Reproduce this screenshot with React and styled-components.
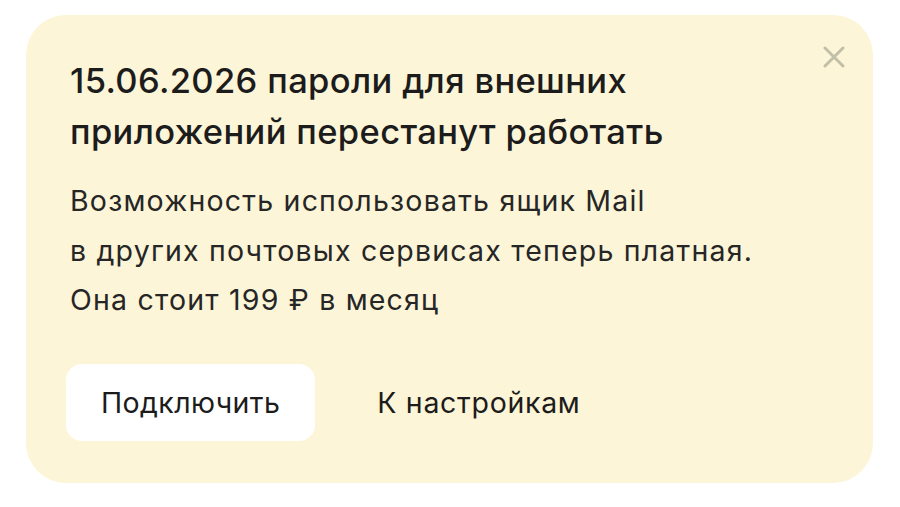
import React from 'react';
import styled, { createGlobalStyle } from 'styled-components';

const GlobalStyle = createGlobalStyle`
  html, body {
    margin: 0;
    padding: 0;
    background: #fff;
  }
  body {
    font-family: Inter, "Noto Sans", "Liberation Sans", sans-serif;
    -webkit-font-smoothing: antialiased;
  }
`

const Page = styled.div`
  width: 900px;
  height: 507px;
  box-sizing: border-box;
  padding: 15px 27px 24px 26px;
`

const Banner = styled.div`
  position: relative;
  height: 100%;
  box-sizing: border-box;
  background-color: #fdf5d7;
  border-radius: 40px;
  padding: 40px 44px 40px 44px;
  display: flex;
  flex-direction: column;
`

const Title = styled.h2`
  margin: 0;
  font-size: 34.5px;
  line-height: 51px;
  font-weight: 500;
  color: #1c1c1c;
  letter-spacing: 0.35px;
`

const Text = styled.p`
  margin: 19px 0 0;
  font-size: 28.5px;
  line-height: 49.5px;
  font-weight: 400;
  color: #262626;
  letter-spacing: 1.2px;
`

const Actions = styled.div`
  display: flex;
  align-items: center;
  margin: 39px 0 0 -4px;
`

const Button = styled.button`
  height: 77px;
  padding: 0 ${p => (p.$primary ? '35px' : '62px')};
  border: none;
  border-radius: 16px;
  background-color: ${p => (p.$primary ? '#fff' : 'transparent')};
  font-family: inherit;
  font-size: 28.5px;
  font-weight: 400;
  letter-spacing: ${p => (p.$primary ? '0.4px' : '0.7px')};
  color: #1c1c1c;
  cursor: pointer;
`

const Close = styled.button`
  position: absolute;
  top: 31px;
  right: 28px;
  width: 22px;
  height: 22px;
  padding: 0;
  border: none;
  background: none;
  cursor: pointer;
`

const CloseIcon = () => (
  <svg width="22" height="22" viewBox="0 0 22 22">
    <path d="M2 2 L20 20 M20 2 L2 20" stroke="#c2bfa9" strokeWidth="3" strokeLinecap="round" />
  </svg>
)

export default function App() {
  return (
    <>
      <GlobalStyle />
      <Page>
        <Banner>
          <Close aria-label="Закрыть"><CloseIcon /></Close>
          <Title>
            15.06.2026 пароли для внешних<br />
            приложений перестанут работать
          </Title>
          <Text>
            Возможность использовать ящик Mail<br />
            в других почтовых сервисах теперь платная.<br />
            Она стоит 199 ₽ в месяц
          </Text>
          <Actions>
            <Button $primary>Подключить</Button>
            <Button>К настройкам</Button>
          </Actions>
        </Banner>
      </Page>
    </>
  )
}
